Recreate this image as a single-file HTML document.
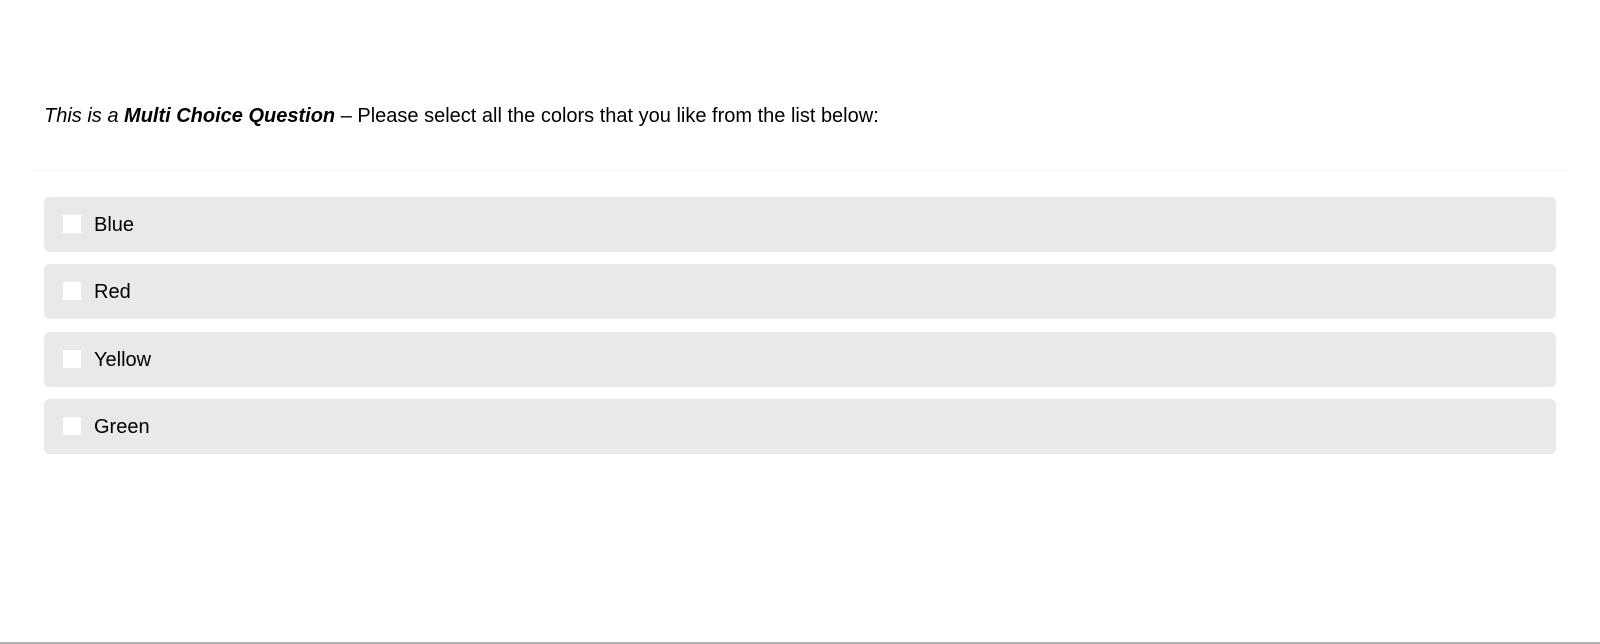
<!DOCTYPE html>
<html><head><style>
html,body{margin:0;padding:0;background:#fff;width:1600px;height:644px;overflow:hidden;font-family:"Liberation Sans",Arial,sans-serif;color:#000}
.q{position:absolute;left:44px;top:104px;font-size:20px;line-height:24px}
.sep{position:absolute;left:32px;width:1537px;top:169px;height:2px;background:#fafafa}
.opt{position:absolute;left:44px;width:1512px;height:55px;background:#e9e9e9;border-radius:6px}
.cb{position:absolute;left:19px;top:18px;width:18px;height:18px;background:#fff}
.lb{position:absolute;left:50px;top:16px;font-size:20px;line-height:24px}
.bot{position:absolute;left:0;top:642px;width:1600px;height:2px;background:#b0b0b0}
</style></head><body>
<div class="q"><i>This is a <b>Multi Choice Question</b></i> – Please select all the colors that you like from the list below:</div>
<div class="sep"></div>
<div class="opt" style="top:197px"><div class="cb"></div><div class="lb">Blue</div></div>
<div class="opt" style="top:264px"><div class="cb"></div><div class="lb">Red</div></div>
<div class="opt" style="top:332px"><div class="cb"></div><div class="lb">Yellow</div></div>
<div class="opt" style="top:399px"><div class="cb"></div><div class="lb">Green</div></div>
<div class="bot"></div>
</body></html>
